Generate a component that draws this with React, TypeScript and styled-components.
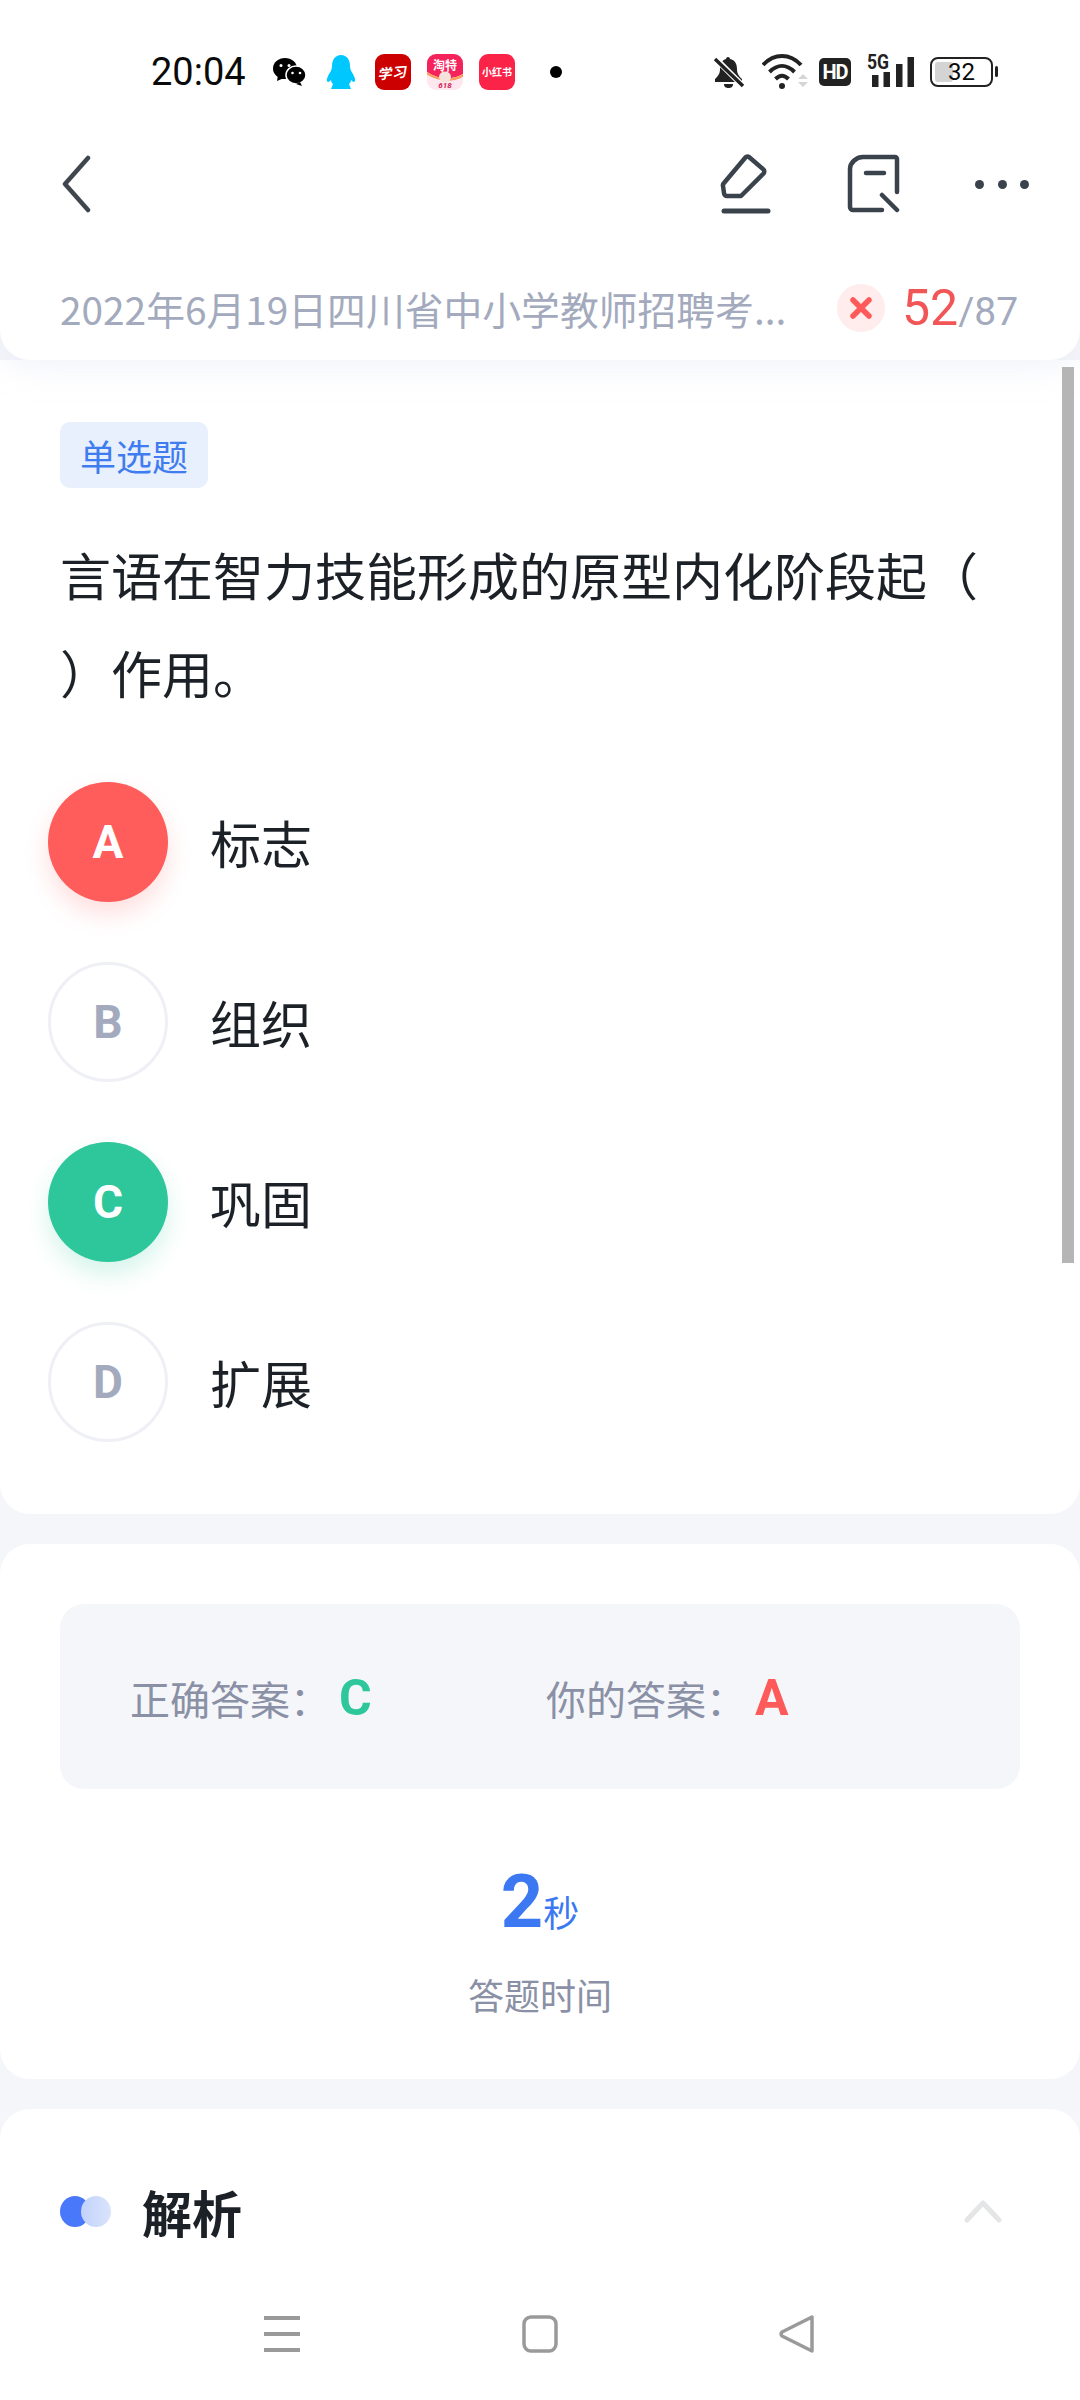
import styled, { createGlobalStyle } from "styled-components";

const GlobalStyle = createGlobalStyle`
  html, body {
    margin: 0;
    padding: 0;
    background: #f5f6fa;
  }
  body {
    font-family: "Roboto", "Noto Sans CJK SC", sans-serif;
  }
`;

const options = [
  { key: "A", text: "标志", state: "wrong" },
  { key: "B", text: "组织", state: "idle" },
  { key: "C", text: "巩固", state: "right" },
  { key: "D", text: "扩展", state: "idle" },
] as const;

type OptionState = "wrong" | "idle" | "right";

export default function App() {
  return (
    <Page>
      <GlobalStyle />
      <Header>
        <StatusBar>
          <Clock>20:04</Clock>
          <AppIcons>
            <svg width="33" height="28" viewBox="0 0 33 28">
              <ellipse cx="12" cy="10.500" rx="12" ry="10.500" fill="#000" />
              <path d="M5 17l-1 6 7-3z" fill="#000" />
              <ellipse cx="23" cy="17" rx="10" ry="9" fill="#000" stroke="#fff" strokeWidth="1.500" />
              <path d="M27 24l2 4-6-2z" fill="#000" />
              <circle cx="8" cy="7.500" r="1.500" fill="#fff" />
              <circle cx="16" cy="7.500" r="1.500" fill="#fff" />
              <circle cx="19.500" cy="15" r="1.300" fill="#fff" />
              <circle cx="27" cy="15" r="1.300" fill="#fff" />
            </svg>
            <QqIcon width="30" height="34" viewBox="0 0 30 34">
              <path
                d="M15 0c6 0 9 5 9 11 0 3 1 5 3 8 2 4 3 7 1 8-1 0-2-1-3-2 0 2-1 3-2 4l2 5H5l2-5c-1-1-2-2-2-4-1 1-2 2-3 2-2-1-1-4 1-8 2-3 3-5 3-8C6 5 9 0 15 0z"
                fill="#00c8ff"
              />
            </QqIcon>
            <AppTile $bg="#cc0000">
              <BrushText>学习</BrushText>
            </AppTile>
            <AppTile $bg="#fff">
              <svg width="36" height="36" viewBox="0 0 36 36">
                <path d="M0 0h36v20c-10 6-24 6-36-2z" fill="#f5235c" />
                <path d="M0 18c12 8 26 8 36 2v3c-10 6-24 5-36-2z" fill="#ff9d5c" />
                <path d="M0 21c12 7 26 8 36 2v13H0z" fill="#ffe7f0" />
                <ellipse cx="18" cy="23" rx="6" ry="5.500" fill="#f3e3dc" />
                <path d="M15 19l-1-3 3 2zM21 19l1-3-3 2z" fill="#f3e3dc" />
                <text x="18" y="15.500" textAnchor="middle" fontSize="12" fontWeight="700" fill="#fff" fontFamily="Noto Sans CJK SC, sans-serif">淘特</text>
                <text x="18" y="33.500" textAnchor="middle" fontSize="8" fontStyle="italic" fontWeight="700" fill="#d0204f" fontFamily="Roboto, sans-serif">618</text>
              </svg>
            </AppTile>
            <AppTile $bg="#fb2448">
              <TileSmall>小红书</TileSmall>
            </AppTile>
            <NoticeDot />
          </AppIcons>
          <SystemIcons>
            <svg width="34" height="36" viewBox="0 0 34 36">
              <path d="M16 3c1 0 2 .8 2 2 5 1 7 5 7 10 0 5 2 7 5 10v3H3v-3c3-3 5-5 5-10 0-5 2-9 6-10 0-1.200 1-2 2-2z" fill="#222" />
              <path d="M12 30h9c0 3-2 4-4.500 4S12 33 12 30z" fill="#222" />
              <path d="M2 3l29 29" stroke="#fff" strokeWidth="6" />
              <path d="M3 5l28 27" stroke="#222" strokeWidth="3.400" />
            </svg>
            <svg width="46" height="36" viewBox="0 0 46 36">
              <path d="M1 11c11-12 27-12 38 0" fill="none" stroke="#222" strokeWidth="4" />
              <path d="M7.500 18c8-8 17-8 25 0" fill="none" stroke="#222" strokeWidth="4" />
              <path d="M13.500 25c4.500-4.500 8.500-4.500 13 0" fill="none" stroke="#222" strokeWidth="4" />
              <circle cx="20" cy="32" r="3" fill="#222" />
              <path d="M36 25l5-5 5 5zM36 28l5 5 5-5z" fill="#d5d5d5" />
            </svg>
            <HdBadge>HD</HdBadge>
            <Signal>
              <FiveG>5G</FiveG>
              <svg width="46" height="36" viewBox="0 0 46 36">
                <rect x="4" y="21" width="6.500" height="12" fill="#222" />
                <rect x="15.500" y="18" width="6.500" height="15" fill="#222" />
                <rect x="28" y="10" width="6.500" height="23" fill="#222" />
                <rect x="39.500" y="3" width="6.500" height="30" fill="#222" />
              </svg>
            </Signal>
            <Battery>
              <BatteryFill />
              <BatteryLabel>32</BatteryLabel>
              <BatteryCap />
            </Battery>
          </SystemIcons>
        </StatusBar>
        <Toolbar>
          <svg width="30" height="58" viewBox="0 0 30 58">
            <path d="M27 3L4 29l23 26" fill="none" stroke="#3f464e" strokeWidth="4.500" strokeLinecap="round" strokeLinejoin="round" />
          </svg>
          <ToolActions>
            <svg width="52" height="62" viewBox="0 0 52 62">
              <path
                d="M30 4l14 12a3 3 0 0 1 0 5L22 43H8a3 3 0 0 1-3-3l-1-7a3 3 0 0 1 1-3L26 5a3 3 0 0 1 4-1z"
                fill="none"
                stroke="#3a424c"
                strokeWidth="4.500"
                strokeLinejoin="round"
              />
              <path d="M5 58h44" stroke="#3a424c" strokeWidth="5" strokeLinecap="round" />
            </svg>
            <svg width="54" height="60" viewBox="0 0 54 60">
              <path
                d="M51 38V5a2 2 0 0 0-2-2H17C10 3 4 9 4 15v38a3 3 0 0 0 3 3h29"
                fill="none"
                stroke="#3a424c"
                strokeWidth="4.500"
                strokeLinecap="round"
                strokeLinejoin="round"
              />
              <path d="M20 19h18M36 41l15 15" stroke="#3a424c" strokeWidth="4.500" strokeLinecap="round" />
            </svg>
            <MoreDots>
              <span />
              <span />
              <span />
            </MoreDots>
          </ToolActions>
        </Toolbar>
        <PaperRow>
          <PaperTitle>2022年6月19日四川省中小学教师招聘考...</PaperTitle>
          <WrongMark>
            <svg width="24" height="24" viewBox="0 0 24 24">
              <path d="M4 4l16 16M20 4L4 20" stroke="#ff5a5a" strokeWidth="5.500" strokeLinecap="round" />
            </svg>
          </WrongMark>
          <Progress>
            <strong>52</strong>/87
          </Progress>
        </PaperRow>
      </Header>

      <QuestionCard>
        <Scrollbar />
        <TypeTag>单选题</TypeTag>
        <QuestionText>言语在智力技能形成的原型内化阶段起（ ）作用。</QuestionText>
        <OptionList>
          {options.map((option) => (
            <OptionRow key={option.key}>
              <OptionBadge $state={option.state}>{option.key}</OptionBadge>
              <OptionText>{option.text}</OptionText>
            </OptionRow>
          ))}
        </OptionList>
      </QuestionCard>

      <ResultCard>
        <AnswerBox>
          <AnswerItem>
            正确答案：<AnswerLetter $color="#2dc79b">C</AnswerLetter>
          </AnswerItem>
          <AnswerItem>
            你的答案：<AnswerLetter $color="#ff5a5a">A</AnswerLetter>
          </AnswerItem>
        </AnswerBox>
        <TimeValue>
          <strong>2</strong>秒
        </TimeValue>
        <TimeLabel>答题时间</TimeLabel>
      </ResultCard>

      <AnalysisCard>
        <AnalysisHead>
          <AnalysisMark>
            <span />
            <span />
          </AnalysisMark>
          <AnalysisTitle>解析</AnalysisTitle>
          <svg width="38" height="24" viewBox="0 0 38 24">
            <path d="M3 21L19 4l16 17" fill="none" stroke="#e3e5e6" strokeWidth="5" strokeLinecap="round" strokeLinejoin="round" />
          </svg>
        </AnalysisHead>
      </AnalysisCard>

      <NavBar>
        <svg width="38" height="38" viewBox="0 0 38 38">
          <path d="M1 3h36M1 19h36M1 35h36" stroke="#9a9a9a" strokeWidth="4" />
        </svg>
        <svg width="36" height="38" viewBox="0 0 36 38">
          <rect x="2" y="2" width="32" height="34" rx="7" fill="none" stroke="#9a9a9a" strokeWidth="3.500" />
        </svg>
        <svg width="36" height="38" viewBox="0 0 36 38">
          <path d="M33 2v34L3 21a3 3 0 0 1 0-4z" fill="none" stroke="#9a9a9a" strokeWidth="3.500" strokeLinejoin="round" />
        </svg>
      </NavBar>
    </Page>
  );
}

const Page = styled.div`
  width: 1080px;
  height: 2400px;
  overflow: hidden;
  position: relative;
  background: #f5f6fa;
`;

const Header = styled.header`
  position: relative;
  z-index: 1;
  background: #fff;
  height: 360px;
  border-radius: 0 0 30px 30px;
  box-shadow: 0 6px 30px rgba(228, 232, 245, 0.5);
  box-sizing: border-box;
  padding-top: 50px;
`;

const StatusBar = styled.div`
  display: flex;
  align-items: center;
  height: 44px;
  padding-left: 151px;
`;

const Clock = styled.span`
  font-family: "Roboto", sans-serif;
  font-size: 38px;
  color: #0a0a0a;
  width: 122px;
`;

const AppIcons = styled.div`
  display: flex;
  align-items: center;
  gap: 16px;
  width: 439px;
`;

const QqIcon = styled.svg`
  margin: 0 3px 0 4px;
`;

const AppTile = styled.div<{ $bg: string }>`
  width: 36px;
  height: 36px;
  border-radius: 9px;
  background: ${(p) => p.$bg};
  display: flex;
  align-items: center;
  justify-content: center;
  overflow: hidden;
`;

const BrushText = styled.span`
  font-family: "Noto Sans CJK SC", sans-serif;
  font-size: 14px;
  line-height: 20px;
  font-weight: 700;
  color: #fff;
  white-space: nowrap;
  transform: skewX(-14deg) rotate(-6deg);
`;

const TileSmall = styled(BrushText)`
  font-size: 10px;
  transform: none;
`;

const NoticeDot = styled.i`
  width: 12px;
  height: 12px;
  border-radius: 50%;
  background: #000;
  margin-left: 19px;
`;

const SystemIcons = styled.div`
  display: flex;
  align-items: center;
  gap: 16px;
`;

const HdBadge = styled.span`
  width: 32px;
  height: 28px;
  margin: 0 1px 0 -5px;
  border-radius: 5px;
  background: #222;
  color: #fff;
  font-family: "Roboto", sans-serif;
  font-weight: 700;
  font-size: 20px;
  letter-spacing: -1px;
  display: flex;
  align-items: center;
  justify-content: center;
`;

const Signal = styled.div`
  position: relative;
  display: flex;
`;

const FiveG = styled.span`
  position: absolute;
  left: -1px;
  top: 0;
  font-family: "Roboto", sans-serif;
  font-weight: 700;
  font-size: 20px;
  line-height: 17px;
  color: #222;
  transform: scaleX(0.88);
  transform-origin: left top;
`;

const Battery = styled.div`
  position: relative;
  box-sizing: border-box;
  width: 63px;
  height: 30px;
  border: 2.5px solid #222;
  border-radius: 8px;
  display: flex;
  align-items: center;
  justify-content: center;
`;

const BatteryFill = styled.i`
  position: absolute;
  left: 3px;
  top: 3px;
  bottom: 3px;
  width: 18px;
  border-radius: 3px;
  background: #d4d4d4;
`;

const BatteryLabel = styled.span`
  position: relative;
  font-family: "Roboto", sans-serif;
  font-size: 24px;
  line-height: 24px;
  color: #0a0a0a;
`;

const BatteryCap = styled.i`
  position: absolute;
  right: -7px;
  top: 7px;
  width: 3px;
  height: 11px;
  border-radius: 2px;
  background: #222;
`;

const Toolbar = styled.div`
  display: flex;
  align-items: center;
  justify-content: space-between;
  margin-top: 59px;
  height: 62px;
  padding: 0 51px 0 61px;
`;

const ToolActions = styled.div`
  display: flex;
  align-items: center;
  gap: 75px;
`;

const MoreDots = styled.div`
  display: flex;
  gap: 13.5px;
  span {
    width: 9px;
    height: 9px;
    border-radius: 50%;
    background: #3a424c;
  }
`;

const PaperRow = styled.div`
  display: flex;
  align-items: center;
  margin-top: 64px;
  padding: 0 61px 0 60px;
`;

const PaperTitle = styled.div`
  font-family: "Noto Sans CJK SC", sans-serif;
  font-size: 38.800px;
  color: #a3aabd;
  width: 755px;
  white-space: nowrap;
  overflow: hidden;
`;

const WrongMark = styled.div`
  width: 48px;
  height: 48px;
  flex: none;
  border-radius: 50%;
  background: #ffecec;
  display: flex;
  align-items: center;
  justify-content: center;
  margin-left: 22px;
`;

const Progress = styled.div`
  margin-left: 17px;
  font-size: 39px;
  color: #a3aabd;
  white-space: nowrap;
  strong {
    font-size: 50px;
    font-weight: 400;
    color: #f25555;
  }
`;

const Card = styled.section`
  background: #fff;
  border-radius: 30px;
  box-sizing: border-box;
`;

const QuestionCard = styled(Card)`
  position: relative;
  height: 1154px;
  padding: 62px 60px 0 60px;
  border-radius: 0 0 30px 30px;
`;

const Scrollbar = styled.i`
  position: absolute;
  right: 6px;
  top: 7px;
  width: 12px;
  height: 896px;
  background: #b5b5b5;
  z-index: 2;
`;

const TypeTag = styled.span`
  display: inline-block;
  font-family: "Noto Sans CJK SC", sans-serif;
  font-size: 36px;
  line-height: 66px;
  padding: 0 20px;
  color: #3f7cf0;
  background: #e8effd;
  border-radius: 10px;
`;

const QuestionText = styled.p`
  font-family: "Noto Sans CJK SC", sans-serif;
  font-size: 51px;
  line-height: 98px;
  color: #1c2127;
  margin: 37px 0 0;
  text-spacing-trim: space-all;
`;

const OptionList = styled.div`
  display: flex;
  flex-direction: column;
  gap: 60px;
  margin: 61px 0 0 -12px;
`;

const OptionRow = styled.div`
  display: flex;
  align-items: center;
  gap: 42px;
`;

const badgeStyles: Record<OptionState, string> = {
  wrong: "background:#ff5c5c;color:#fff;box-shadow:0 12px 24px rgba(255,92,92,.2);",
  right: "background:#2dc79b;color:#fff;box-shadow:0 12px 24px rgba(45,199,155,.2);",
  idle: "background:#fff;color:#a3aabd;border:3px solid #eff0f5;",
};

const OptionBadge = styled.div<{ $state: OptionState }>`
  width: 120px;
  height: 120px;
  box-sizing: border-box;
  border-radius: 50%;
  display: flex;
  align-items: center;
  justify-content: center;
  font-family: "Roboto", sans-serif;
  font-weight: 700;
  font-size: 46px;
  ${(p) => badgeStyles[p.$state]}
`;

const OptionText = styled.span`
  font-family: "Noto Sans CJK SC", sans-serif;
  font-size: 51px;
  color: #1c2127;
`;

const ResultCard = styled(Card)`
  margin-top: 30px;
  height: 535px;
  padding: 60px;
  text-align: center;
`;

const AnswerBox = styled.div`
  display: grid;
  grid-template-columns: 416px 1fr;
  align-items: center;
  height: 185px;
  padding: 3px 0 0 70px;
  box-sizing: border-box;
  background: #f5f6fa;
  border-radius: 24px;
  text-align: left;
`;

const AnswerItem = styled.div`
  font-family: "Noto Sans CJK SC", sans-serif;
  font-size: 40px;
  color: #8a90a5;
`;

const AnswerLetter = styled.span<{ $color: string }>`
  margin-left: 9px;
  font-family: "Roboto", sans-serif;
  font-weight: 700;
  font-size: 50px;
  color: ${(p) => p.$color};
`;

const TimeValue = styled.div`
  margin-top: 73px;
  font-family: "Noto Sans CJK SC", sans-serif;
  font-size: 36px;
  color: #3b78f2;
  line-height: 80px;
  strong {
    font-family: "Roboto", sans-serif;
    font-size: 74px;
    font-weight: 700;
  }
`;

const TimeLabel = styled.div`
  margin-top: 17px;
  font-family: "Noto Sans CJK SC", sans-serif;
  font-size: 36px;
  color: #8a90a5;
`;

const AnalysisCard = styled(Card)`
  margin-top: 30px;
  height: 400px;
  padding: 54px 78px 0 60px;
`;

const AnalysisHead = styled.div`
  display: flex;
  align-items: center;
  height: 96px;
`;

const AnalysisMark = styled.div`
  display: flex;
  span {
    width: 30px;
    height: 31px;
    border-radius: 50%;
    background: #4a78fa;
  }
  span + span {
    margin-left: -9px;
    background: linear-gradient(90deg, #c2d2fb, #d9e3fc);
  }
`;

const AnalysisTitle = styled.h2`
  flex: 1;
  margin: 0 0 0 31px;
  font-family: "Noto Sans CJK SC", sans-serif;
  font-size: 50px;
  font-weight: 700;
  color: #1c2127;
`;

const NavBar = styled.nav`
  position: absolute;
  left: 0;
  right: 0;
  bottom: 0;
  height: 140px;
  background: #fff;
  display: flex;
  align-items: center;
  justify-content: space-between;
  padding: 8px 265px 0 263px;
  box-sizing: border-box;
`;
